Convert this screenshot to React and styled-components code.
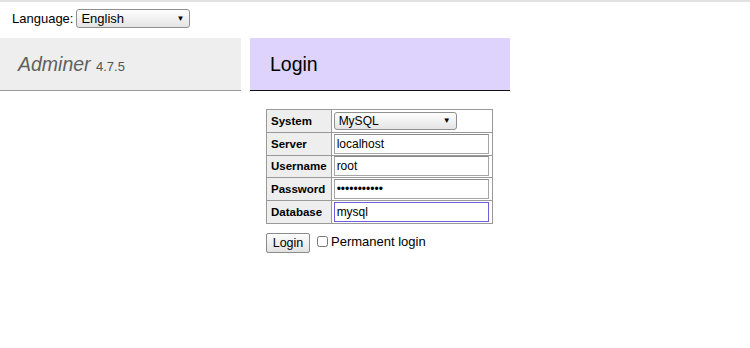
import React from 'react';
import styled, { createGlobalStyle } from 'styled-components';

const GlobalStyle = createGlobalStyle`
  body {
    margin: 0;
    background: #fff;
    font-family: "Liberation Sans", Arial, Helvetica, sans-serif;
    font-size: 13px;
    color: #000;
  }
`;

const Page = styled.div`
  width: 750px;
  height: 348px;
  border-top: 2px solid #e2e2e2;
  box-sizing: border-box;
`;

const LangBar = styled.div`
  height: 36px;
  box-sizing: border-box;
  padding: 7px 12px 0;
  display: flex;
  align-items: flex-start;
  gap: 3px;
  line-height: 19px;
`;

const SelectWrap = styled.div`
  position: relative;
  display: inline-block;
  width: ${(p) => p.$width}px;
  height: ${(p) => p.$height}px;
`;

const NativeSelect = styled.select`
  appearance: none;
  width: 100%;
  height: 100%;
  box-sizing: border-box;
  margin: 0;
  padding: 0 16px 0 4px;
  border: 1px solid #8f8f8f;
  border-radius: 3px;
  background: linear-gradient(#fefefe, #e4e4e4);
  font-family: inherit;
  font-size: ${(p) => p.$size}px;
  color: #000;
  outline: none;
`;

const Arrow = styled.span`
  position: absolute;
  right: 6px;
  top: 50%;
  transform: translateY(-50%);
  font-size: 8px;
  line-height: 1;
  pointer-events: none;
`;

const Main = styled.div`
  display: flex;
  align-items: flex-start;
`;

const Menu = styled.div`
  width: 241px;
`;

const Title = styled.h1`
  margin: 0;
  padding: 14px 18px;
  height: 24px;
  line-height: 24px;
  background: #eee;
  border-bottom: 1px solid #999;
  color: #5f5f5f;
  font-size: 19.5px;
  font-weight: normal;
  font-style: italic;
`;

const Version = styled.span`
  font-size: 13px;
  font-style: normal;
  color: #555;
`;

const Content = styled.div`
  width: 260px;
  margin-left: 9px;
`;

const Heading = styled.h2`
  margin: 0;
  padding: 14px 20px;
  height: 24px;
  line-height: 24px;
  background: #ddd3fc;
  border-bottom: 1px solid #111;
  font-size: 19.5px;
  font-weight: normal;
`;

const Form = styled.form`
  padding: 18px 0 0 16px;
`;

const Table = styled.table`
  border-collapse: collapse;
  border: 1px solid #999;
  font-size: 12px;
`;

const Th = styled.th`
  padding: 0 4px;
  height: 21.8px;
  border: 1px solid #999;
  background: #eee;
  text-align: left;
  font-size: 11.5px;
  font-weight: bold;
  white-space: nowrap;
`;

const Td = styled.td`
  padding: 0 3px 0 2px;
  border: 1px solid #999;
  height: 21.8px;
`;

const Input = styled.input`
  display: block;
  width: 155px;
  height: 20px;
  box-sizing: border-box;
  margin: 0;
  padding: 0 2px;
  border: 1px solid ${(p) => (p.$focus ? '#6d5fd9' : '#a6a6a6')};
  border-top-color: ${(p) => (p.$focus ? '#6d5fd9' : '#8a8a8a')};
  font-family: inherit;
  font-size: 12px;
  color: #000;
  background: #fff;
  outline: none;
`;

const Actions = styled.div`
  display: flex;
  align-items: center;
  margin-top: 9px;
  font-size: 13px;
`;

const Button = styled.button`
  height: 20px;
  width: 44px;
  padding: 0;
  border: 1px solid #8a8a8a;
  border-radius: 2px;
  background: linear-gradient(#fdfdfd, #e2e2e2);
  font-family: inherit;
  font-size: 12.5px;
  color: #000;
`;

const Check = styled.label`
  display: flex;
  align-items: center;
  margin-left: 5px;
  margin-top: -3px;
  input {
    margin: 0 3px 0 2px;
    width: 11px;
    height: 11px;
  }
`;

const fields = [
  { label: 'Server', type: 'text', value: 'localhost' },
  { label: 'Username', type: 'text', value: 'root' },
  { label: 'Password', type: 'password', value: 'password123' },
  { label: 'Database', type: 'text', value: 'mysql', focus: true },
];

export default function App() {
  return (
    <Page>
      <GlobalStyle />
      <LangBar>
        <span>Language:</span>
        <SelectWrap $width={114} $height={19}>
          <NativeSelect $size={13} defaultValue="en">
            <option value="en">English</option>
          </NativeSelect>
          <Arrow>▼</Arrow>
        </SelectWrap>
      </LangBar>
      <Main>
        <Menu>
          <Title>
            Adminer <Version>4.7.5</Version>
          </Title>
        </Menu>
        <Content>
          <Heading>Login</Heading>
          <Form onSubmit={(e) => e.preventDefault()}>
            <Table>
              <tbody>
                <tr>
                  <Th>System</Th>
                  <Td>
                    <SelectWrap $width={123} $height={18}>
                      <NativeSelect $size={12} defaultValue="server">
                        <option value="server">MySQL</option>
                      </NativeSelect>
                      <Arrow>▼</Arrow>
                    </SelectWrap>
                  </Td>
                </tr>
                {fields.map((f) => (
                  <tr key={f.label}>
                    <Th>{f.label}</Th>
                    <Td>
                      <Input type={f.type} defaultValue={f.value} $focus={f.focus} readOnly />
                    </Td>
                  </tr>
                ))}
              </tbody>
            </Table>
            <Actions>
              <Button type="submit">Login</Button>
              <Check>
                <input type="checkbox" />
                Permanent login
              </Check>
            </Actions>
          </Form>
        </Content>
      </Main>
    </Page>
  );
}
